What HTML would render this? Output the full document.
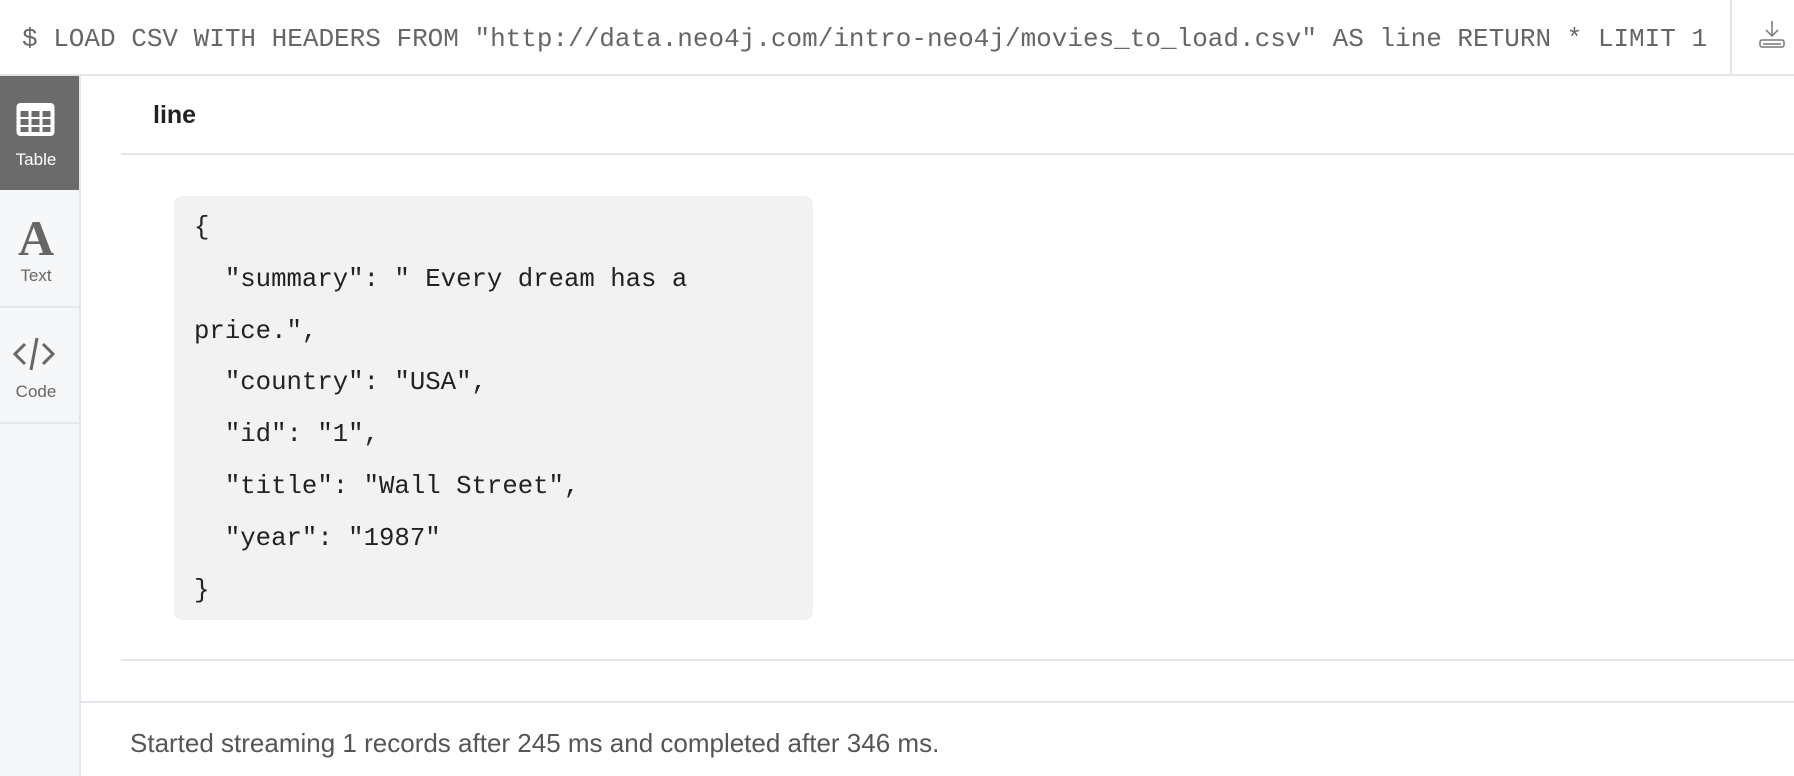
<!DOCTYPE html>
<html><head><meta charset="utf-8"><style>
*{margin:0;padding:0;box-sizing:border-box}
html,body{width:1794px;height:776px;overflow:hidden;background:#fff;font-family:"Liberation Sans",sans-serif}
.top{position:absolute;left:0;top:0;width:1794px;height:76px;border-bottom:2px solid #e3e7ec}
.cmd{position:absolute;left:22px;top:23px;font-family:"Liberation Mono",monospace;font-size:26px;color:#666;white-space:pre;line-height:32px}
.vsep{position:absolute;left:1730px;top:0;width:2px;height:75px;background:#e3e7ec}
.side{position:absolute;left:0;top:76px;width:81px;height:700px;background:#f6f7f9;border-right:2px solid #e3e7ec}
.item{position:absolute;left:0;width:79px;font-size:17px;color:#666;border-bottom:2px solid #e3e7ec}
.lbl{position:absolute;left:0;width:72px;text-align:center}
.line1{position:absolute;left:121px;top:153px;right:0;height:2px;background:#e3e7ec}
.hdr{position:absolute;left:153px;top:101px;font-size:25px;font-weight:bold;color:#222}
.box{position:absolute;left:174px;top:196px;width:639px;height:424px;background:#f2f2f2;border-radius:8px}
.code{position:absolute;left:194px;top:202px;width:600px;font-family:"Liberation Mono",monospace;font-size:25.7px;line-height:51.8px;color:#222;white-space:pre-wrap}
.line2{position:absolute;left:121px;top:659px;right:0;height:2px;background:#e3e7ec}
.line3{position:absolute;left:81px;top:701px;right:0;height:2px;background:#e3e7ec}
.foot{position:absolute;left:130px;top:728px;font-size:26px;color:#555}
</style></head><body>
<div class="top"><div class="cmd">$ LOAD CSV WITH HEADERS FROM "http://data.neo4j.com/intro-neo4j/movies_to_load.csv" AS line RETURN * LIMIT 1</div></div>
<div class="vsep"></div>
<svg style="position:absolute;left:1758px;top:20px" width="28" height="30" viewBox="0 0 28 30" fill="none" stroke="#777" stroke-width="1.5"><path d="M14 1v14M8 10l6 6 6-6"/><rect x="2" y="20" width="24" height="7" rx="2"/><path d="M5 24h18"/></svg>
<div class="side">
<div class="item" style="top:0;height:114px;background:#6b6b6b;color:#fff;border:none">
<svg style="position:absolute;left:16px;top:27px" width="39" height="33" viewBox="0 0 38 33"><rect x="0" y="0" width="38" height="33" rx="4" fill="#fff"/><g fill="#6b6b6b"><rect x="4" y="8" width="8" height="6"/><rect x="15" y="8" width="8" height="6"/><rect x="26" y="8" width="8" height="6"/><rect x="4" y="16" width="8" height="6"/><rect x="15" y="16" width="8" height="6"/><rect x="26" y="16" width="8" height="6"/><rect x="4" y="24" width="8" height="5"/><rect x="15" y="24" width="8" height="5"/><rect x="26" y="24" width="8" height="5"/></g></svg>
<div class="lbl" style="top:74px">Table</div></div>
<div class="item" style="top:114px;height:118px">
<div class="lbl" style="top:19px;font-family:'Liberation Serif',serif;font-weight:bold;font-size:50px;color:#666">A</div>
<div class="lbl" style="top:76px">Text</div></div>
<div class="item" style="top:232px;height:116px">
<svg style="position:absolute;left:12px;top:27px" width="44" height="38" viewBox="0 0 44 38" fill="none" stroke="#666" stroke-width="3"><path d="M13 9L3 19l10 10M31 9l10 10-10 10M25 3L19 35"/></svg>
<div class="lbl" style="top:74px">Code</div></div>
</div>
<div class="hdr">line</div>
<div class="line1"></div>
<div class="box"></div>
<div class="code">{
  "summary": " Every dream has a price.",
  "country": "USA",
  "id": "1",
  "title": "Wall Street",
  "year": "1987"
}</div>
<div class="line2"></div>
<div class="line3"></div>
<div class="foot">Started streaming 1 records after 245 ms and completed after 346 ms.</div>
</body></html>
